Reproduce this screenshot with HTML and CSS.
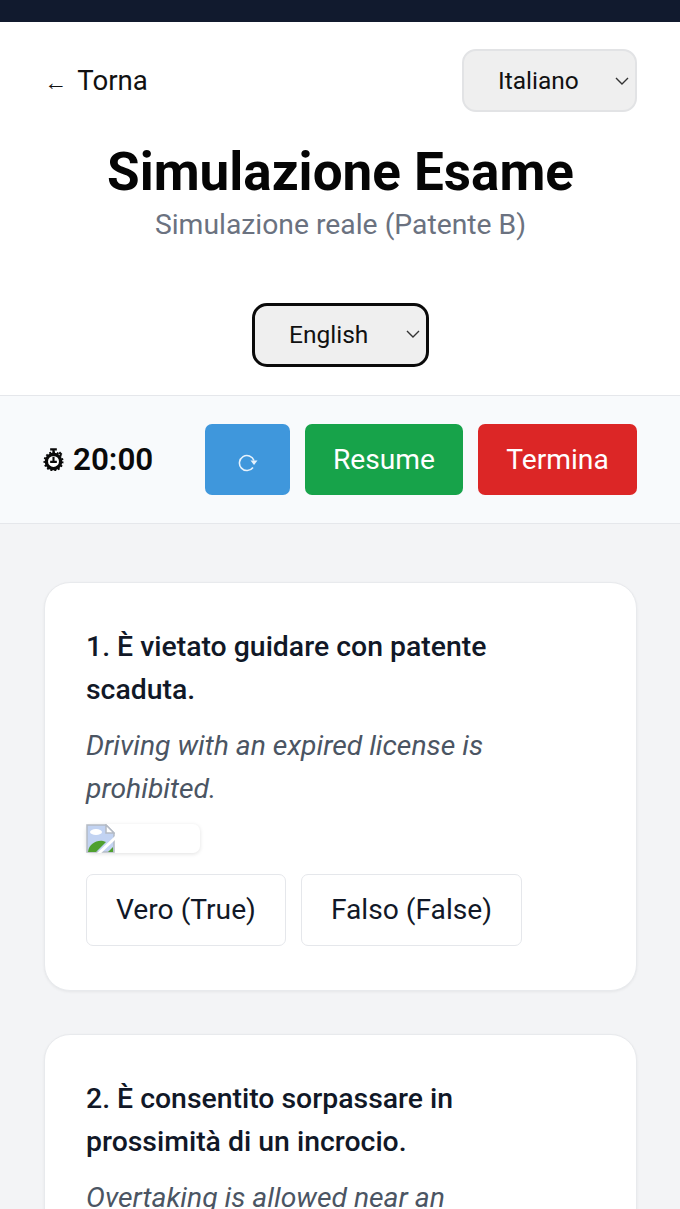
FILE: index.html
```html
<!DOCTYPE html>
<html lang="it">
<head>
<meta charset="utf-8">
<title>Simulazione Esame</title>
<link rel="stylesheet" href="styles.css">
</head>
<body>
<div class="topbar"></div>

<header class="head">
	<div class="head-row">
		<a class="back" href="#"><span class="back-arrow">←</span> Torna</a>
		<div class="select select-lang">
			<span>Italiano</span>
			<svg class="chev" viewBox="0 0 14 8"><path d="M1 1l6 6 6-6"/></svg>
		</div>
	</div>
	<h1 class="title">Simulazione Esame</h1>
	<p class="subtitle">Simulazione reale (Patente B)</p>
	<div class="select select-trans">
		<span>English</span>
		<svg class="chev" viewBox="0 0 14 8"><path d="M1 1l6 6 6-6"/></svg>
	</div>
</header>

<div class="timerbar">
	<div class="timer">
		<svg class="stopwatch" viewBox="0 0 22 24">
			<path class="sw-top" d="M7.5 1.5h7M11 1.5v4M17 4.5l2.5 2.5"/>
			<circle class="sw-ring" cx="11" cy="14" r="7.5"/>
			<circle class="sw-ticks" cx="11" cy="14" r="9.5"/>
			<path class="sw-hand" d="M11 9v5.5M7.5 14.5h7"/>
		</svg>
		<span>20:00</span>
	</div>
	<div class="actions">
		<button class="btn btn-blue">
			<svg class="reload" viewBox="0 0 20 18">
				<path class="reload-arc" d="M15 13.5A7.5 7.5 0 1 1 16 6.5"/>
				<path class="reload-head" d="M12.5 6.5h7l-3.5 4.5z"/>
			</svg>
		</button>
		<button class="btn btn-green">Resume</button>
		<button class="btn btn-red">Termina</button>
	</div>
</div>

<main class="list">
	<section class="card">
		<h2 class="q">1. È vietato guidare con patente scaduta.</h2>
		<p class="tr">Driving with an expired license is prohibited.</p>
		<div class="pic">
			<svg class="broken" viewBox="0 0 29 29">
				<path d="M1 1h19l8 8v19H1z" fill="#c2d3f2" stroke="#b4bac4" stroke-width="1.5"/>
				<path d="M20 1v8h8z" fill="#fff" stroke="#b4bac4" stroke-width="1.5"/>
				<ellipse cx="10" cy="8" rx="6" ry="3" fill="#fff"/>
				<path d="M2 28c1-8 8-12 15-11l3 1-10 10z" fill="#4fa02e"/>
				<path d="M22 28l5-5v5z" fill="#4fa02e"/>
				<path d="M12 30L30 13" stroke="#fff" stroke-width="3"/>
			</svg>
		</div>
		<div class="answers">
			<button class="ans">Vero (True)</button>
			<button class="ans">Falso (False)</button>
		</div>
	</section>
	<section class="card">
		<h2 class="q">2. È consentito sorpassare in prossimità di un incrocio.</h2>
		<p class="tr">Overtaking is allowed near an intersection.</p>
	</section>
</main>
</body>
</html>
```

FILE: styles.css
```css
*{margin:0;padding:0;box-sizing:border-box;}
html,body{height:100vh;overflow:hidden;}
body{font-family:Roboto,"Liberation Sans",sans-serif;background:#f3f4f6;color:#111;}

.topbar{height:22px;background:#111a2e;}

/* header */
.head{display:flex;flex-direction:column;align-items:center;height:373px;padding:27px 43px 0 44px;background:#fff;}
.head-row{display:flex;justify-content:space-between;align-items:center;width:100%;}
.back{font-size:27.6px;color:#111;text-decoration:none;}
.back-arrow{margin-right:4px;font-size:23px;}
.select{display:flex;align-items:center;justify-content:space-between;background:#efefef;color:#111;font-size:24.5px;}
.select-lang{width:175px;height:63px;padding:0 6px 0 34px;border:2px solid #e2e3e5;border-radius:14px;}
.select-trans{width:177px;height:64px;margin-top:59px;padding:0 6px 2px 34px;border:3px solid #0a0a0a;border-radius:15px;}
.chev{width:14px;height:8px;fill:none;stroke:#333;stroke-width:1.4;}
.title{margin-top:30px;font-size:53px;line-height:60px;font-weight:700;color:#050505;}
.subtitle{margin-top:4px;font-size:28.3px;line-height:38px;color:#6b7280;}

/* timer row */
.timerbar{display:flex;justify-content:space-between;align-items:center;height:129px;padding:0 43px;background:#f8fafc;border-top:1px solid #e5e7eb;border-bottom:1px solid #e5e7eb;}
.timer{display:flex;align-items:center;gap:9px;font-size:31.4px;font-weight:600;color:#0a0a0a;}
.stopwatch{width:21px;height:23px;margin-top:-1px;}
.sw-top{fill:none;stroke:#0a0a0a;stroke-width:2.4;}
.sw-ring{fill:#fff;stroke:#0a0a0a;stroke-width:3.5;}
.sw-ticks{fill:none;stroke:#0a0a0a;stroke-width:2;stroke-dasharray:2 2;}
.sw-hand{fill:none;stroke:#0a0a0a;stroke-width:2.2;}
.actions{display:flex;gap:15px;}
.btn{height:71px;border:0;border-radius:7px;color:#fff;font:400 28.2px Roboto,"Liberation Sans",sans-serif;}
.btn-blue{display:flex;align-items:center;justify-content:center;width:85px;background:#3f97dc;}
.btn-green{width:158px;background:#17a34a;}
.btn-red{width:159px;background:#dc2626;}
.reload{width:20px;height:18px;margin-top:7px;}
.reload-arc{fill:none;stroke:#e6f2fc;stroke-width:1.6;}
.reload-head{fill:#e6f2fc;}

/* questions */
.list{display:flex;flex-direction:column;gap:43px;padding:58px 43px 0 44px;}
.card{padding:42px 50px 44px 41px;background:#fff;border:1px solid #e8eaed;border-radius:26px;box-shadow:0 1px 3px rgba(0,0,0,.06);}
.q{font-size:28.4px;line-height:43px;font-weight:500;color:#111827;}
.tr{margin-top:13px;font-size:28.3px;line-height:43px;font-style:italic;color:#4b5563;}
.pic{width:114px;height:29px;margin-top:14px;background:#fff;border-radius:7px;box-shadow:0 1px 4px rgba(0,0,0,.12);}
.broken{display:block;width:29px;height:29px;}
.answers{display:flex;gap:15px;margin-top:21px;}
.ans{height:72px;padding:0 29px 1px;background:#fff;border:1px solid #e5e7eb;border-radius:7px;color:#111827;font:400 28.2px Roboto,"Liberation Sans",sans-serif;}
```
